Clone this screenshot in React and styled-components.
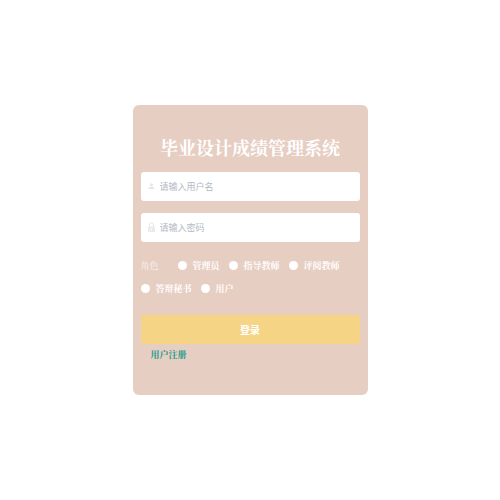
import React from "react";
import styled, { createGlobalStyle } from "styled-components";

const serif = '"Songti SC", "Noto Serif CJK SC", "Noto Sans CJK SC", serif';
const sans = '"Noto Sans CJK SC", sans-serif';

const GlobalStyle = createGlobalStyle`
  *, *::before, *::after { box-sizing: border-box; }
  body { margin: 0; background: #fff; font-family: ${serif}; }
`;

const Page = styled.main`
  min-height: 100vh;
  display: flex;
  align-items: center;
  justify-content: center;
`;

const Card = styled.form`
  width: 100%;
  max-width: 235px;
  display: flex;
  flex-direction: column;
  padding: 29px 8px 34px;
  border-radius: 6px;
  background: #e7cec3;
`;

const Title = styled.h1`
  margin: 0 0 12px;
  font-size: 18px;
  line-height: 26px;
  font-weight: 700;
  text-align: center;
  white-space: nowrap;
  color: #fff;
`;

const Field = styled.label`
  display: flex;
  align-items: center;
  gap: 4px;
  height: 29px;
  margin-bottom: 12px;
  padding: 0 6px;
  border-radius: 3px;
  background: #fff;
`;

const FieldIcon = styled.svg`
  flex: none;
  width: 9px;
  height: 11px;
  fill: none;
  stroke: #e6e6e6;
`;

const TextInput = styled.input`
  flex: 1;
  min-width: 0;
  height: 100%;
  padding: 0;
  border: 0;
  outline: 0;
  background: transparent;
  font: 400 9px ${sans};
  color: #606266;
  &::placeholder { color: #b4b8c4; opacity: 1; }
`;

const Roles = styled.div`
  display: flex;
  flex-wrap: wrap;
  align-items: center;
  column-gap: 9px;
  margin-bottom: 15px;
  font-size: 9px;
  line-height: 23px;
`;

const RolesLabel = styled.span`
  width: 28px;
  color: #faf4f2;
`;

const Role = styled.label`
  display: flex;
  align-items: center;
  gap: 6px;
  font-weight: 700;
  color: #fff;
`;

const Radio = styled.input`
  appearance: none;
  width: 9px;
  height: 9px;
  margin: 0;
  border-radius: 50%;
  background: #fff;
  &:checked { border: 2px solid #f6d486; }
`;

const Submit = styled.button`
  height: 29px;
  padding: 0;
  border: 0;
  border-radius: 2px;
  background: #f6d486;
  color: #fff;
  font: 700 10px ${sans};
  cursor: pointer;
`;

const RegisterLink = styled.a`
  align-self: flex-start;
  margin: 4px 0 0 10px;
  font-size: 9px;
  line-height: 13px;
  font-weight: 700;
  text-decoration: none;
  color: #17998a;
`;

const roles = ["管理员", "指导教师", "评阅教师", "答辩秘书", "用户"];

export default function App() {
  return (
    <>
      <GlobalStyle />
      <Page>
        <Card lang="zh-CN" onSubmit={(e) => e.preventDefault()}>
          <Title>毕业设计成绩管理系统</Title>
          <Field>
            <FieldIcon viewBox="0 0 9 11" aria-hidden="true">
              <circle cx="4.5" cy="3.8" r="1.6" fill="#e6e6e6" stroke="none" />
              <path d="M1.6 8V7.4C1.6 6.3 3 6 4.5 6S7.4 6.3 7.4 7.4V8Z" fill="#e6e6e6" stroke="none" />
            </FieldIcon>
            <TextInput type="text" aria-label="用户名" placeholder="请输入用户名" />
          </Field>
          <Field>
            <FieldIcon viewBox="0 0 9 11" aria-hidden="true">
              <path d="M2.4 5V3a2.1 2.1 0 0 1 4.2 0V5" />
              <rect x="1" y="4.6" width="7" height="5.4" rx="0.7" fill="#ebebeb" stroke="none" />
              <path d="M4.5 6.4V8.2" stroke="#fff" />
            </FieldIcon>
            <TextInput type="password" aria-label="密码" placeholder="请输入密码" />
          </Field>
          <Roles role="radiogroup" aria-labelledby="role-label">
            <RolesLabel id="role-label">角色</RolesLabel>
            {roles.map((role) => (
              <Role key={role}>
                <Radio type="radio" name="role" value={role} />
                {role}
              </Role>
            ))}
          </Roles>
          <Submit type="submit">登录</Submit>
          <RegisterLink href="#register">用户注册</RegisterLink>
        </Card>
      </Page>
    </>
  );
}
